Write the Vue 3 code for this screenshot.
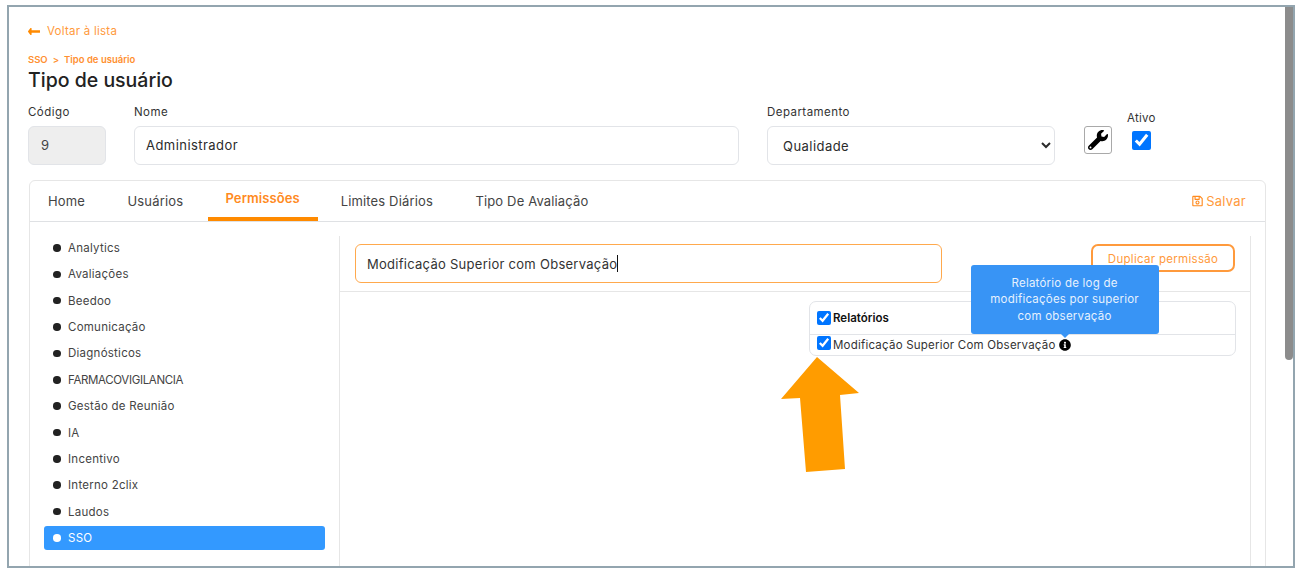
<script setup>
const modules = [
  'Analytics',
  'Avaliações',
  'Beedoo',
  'Comunicação',
  'Diagnósticos',
  'FARMACOVIGILANCIA',
  'Gestão de Reunião',
  'IA',
  'Incentivo',
  'Interno 2clix',
  'Laudos',
  'SSO'
]

const tabs = ['Home', 'Usuários', 'Permissões', 'Limites Diários', 'Tipo De Avaliação']
</script>

<template>
  <div class="frame">
    <div class="page">
      <a class="back">
        <svg class="back-icon" viewBox="0 150 448 212" preserveAspectRatio="none">
          <path d="M134.059 296H436c6.627 0 12-5.373 12-12v-56c0-6.627-5.373-12-12-12H134.059v-46.059c0-21.382-25.851-32.09-40.971-16.971L7.029 239.029c-9.373 9.373-9.373 24.569 0 33.941l86.059 86.059c15.119 15.119 40.971 4.411 40.971-16.971V296z" />
        </svg>
        Voltar à lista
      </a>

      <div class="breadcrumb">
        <span>SSO</span>
        <span class="sep">&gt;</span>
        <span>Tipo de usuário</span>
      </div>
      <h1 class="title">Tipo de usuário</h1>

      <div class="form-row">
        <div class="field code">
          <label>Código</label>
          <input value="9" disabled />
        </div>
        <div class="field name">
          <label>Nome</label>
          <input value="Administrador" />
        </div>
        <div class="field dept">
          <label>Departamento</label>
          <select>
            <option>Qualidade</option>
          </select>
        </div>
        <button class="tool-btn">
          <svg viewBox="0 0 512 512">
            <path d="M507.73 109.1c-2.24-9.03-13.54-12.09-20.12-5.51l-74.36 74.36-67.88-11.31-11.31-67.88 74.36-74.36c6.62-6.62 3.43-17.9-5.66-20.16-47.38-11.74-99.55.91-136.58 37.93-39.64 39.64-50.55 97.1-34.05 147.2L18.74 402.76c-24.99 24.99-24.99 65.51 0 90.5 24.99 24.99 65.51 24.99 90.5 0l213.21-213.21c50.12 16.71 107.47 5.68 147.37-34.22 37.07-37.07 49.7-89.32 37.91-136.73zM64 472c-13.25 0-24-10.75-24-24 0-13.26 10.75-24 24-24s24 10.74 24 24c0 13.25-10.75 24-24 24z" />
          </svg>
        </button>
        <div class="active-field">
          <label>Ativo</label>
          <input type="checkbox" checked />
        </div>
      </div>

      <div class="card">
        <div class="tabs">
          <a v-for="tab in tabs" :key="tab" class="tab" :class="{ current: tab === 'Permissões' }">{{ tab }}</a>
          <a class="save">
            <svg viewBox="0 0 448 512">
              <path d="M433.941 129.941l-83.882-83.882A48 48 0 0 0 316.118 32H48C21.49 32 0 53.49 0 80v352c0 26.51 21.49 48 48 48h352c26.51 0 48-21.49 48-48V163.882a48 48 0 0 0-14.059-33.941zM272 80v80H144V80h128zm122 352H54a6 6 0 0 1-6-6V86a6 6 0 0 1 6-6h42v104c0 13.255 10.745 24 24 24h176c13.255 0 24-10.745 24-24V83.882l78.243 78.243a6 6 0 0 1 1.757 4.243V426a6 6 0 0 1-6 6zM224 232c-48.523 0-88 39.477-88 88s39.477 88 88 88 88-39.477 88-88-39.477-88-88-88zm0 128c-22.056 0-40-17.944-40-40s17.944-40 40-40 40 17.944 40 40-17.944 40-40 40z" />
            </svg>
            Salvar
          </a>
        </div>

        <div class="panel">
          <ul class="modules">
            <li
              v-for="item in modules"
              :key="item"
              :class="{ selected: item === 'SSO', caps: item.length > 3 && item === item.toUpperCase() }"
            >
              <i class="dot"></i>{{ item }}
            </li>
          </ul>

          <div class="main">
            <div class="search-row">
              <div class="search">Modificação Superior com Observação<span class="caret"></span></div>
              <button class="duplicate">Duplicar permissão</button>
            </div>

            <div class="boxes">
              <div class="box">
                <div class="box-head">
                  <input type="checkbox" checked />
                  <span>Relatórios</span>
                </div>
                <div class="box-row">
                  <input type="checkbox" checked />
                  <span>Modificação Superior Com Observação</span>
                  <span class="info">
                    <svg viewBox="0 0 512 512">
                      <path d="M256 8C119 8 8 119 8 256s111 248 248 248 248-111 248-248S393 8 256 8zm0 110c23.196 0 42 18.804 42 42s-18.804 42-42 42-42-18.804-42-42 18.804-42 42-42zm56 254c0 6.627-5.373 12-12 12h-88c-6.627 0-12-5.373-12-12v-24c0-6.627 5.373-12 12-12h12v-64h-12c-6.627 0-12-5.373-12-12v-24c0-6.627 5.373-12 12-12h64c6.627 0 12 5.373 12 12v100h12c6.627 0 12 5.373 12 12v24z" />
                    </svg>
                    <span class="tooltip">Relatório de log de modificações por superior com observação</span>
                  </span>
                </div>
              </div>
            </div>
          </div>
        </div>
      </div>
    </div>

    <svg class="big-arrow" viewBox="0 0 81 117">
      <polygon points="37,1 79,37 60,39 65,113 26,116 20,42 1,43" />
    </svg>
    <div class="thumb"></div>
  </div>
</template>

<style>
html,
body {
  margin: 0;
  background: #fff;
  overflow: hidden;
}
</style>

<style scoped>
* {
  box-sizing: border-box;
}

.frame {
  position: relative;
  width: 1288px;
  height: 563px;
  margin: 5px 0 0 7px;
  border: 2px solid #93a5af;
  overflow: hidden;
  background: #fff;
  font-family: Inter, "Open Sans", sans-serif;
  letter-spacing: 0.25px;
  color: #2b2b2b;
}

.page {
  padding: 17px 0 0 19px;
  width: 1257px;
}

.back {
  display: flex;
  align-items: center;
  height: 14px;
  gap: 7px;
  font-size: 11.5px;
  color: #ff9a3c;
}

.back-icon {
  width: 12px;
  height: 7px;
  fill: #ff8a00;
}

.breadcrumb {
  display: flex;
  gap: 5px;
  margin-top: 16px;
  font-size: 9.5px;
  line-height: 12px;
  font-weight: 600;
  letter-spacing: 0;
  color: #ff9030;
}

.title {
  margin: 1px 0 0;
  font-size: 19.5px;
  line-height: 26px;
  font-weight: 500;
  letter-spacing: 0;
  color: #222;
}

.form-row {
  display: flex;
  align-items: flex-start;
  margin-top: 12px;
}

.field label {
  display: block;
  height: 21px;
  font-size: 11.5px;
  line-height: 15px;
  letter-spacing: 0.45px;
  color: #333;
}

.field input,
.field select {
  display: block;
  width: 100%;
  height: 39px;
  padding: 0 11px;
  border: 1px solid #e2e4e8;
  border-radius: 6px;
  background: #fff;
  font-family: inherit;
  font-size: 13px;
  letter-spacing: 0.45px;
  color: #2b2b2b;
}

.field input {
  padding-bottom: 2px;
}

.code input {
  padding-left: 12px;
}

.field input:disabled {
  background: #eee;
  color: #444;
}

.code {
  width: 78px;
  margin-right: 28px;
}

.name {
  width: 605px;
  margin-right: 28px;
}

.dept {
  width: 288px;
}

.tool-btn {
  display: flex;
  align-items: center;
  justify-content: center;
  width: 28px;
  height: 28px;
  margin: 21px 0 0 29px;
  padding: 0;
  border: 1px solid #a9a9a9;
  border-radius: 3px;
  background: #fff;
}

.tool-btn svg {
  width: 20px;
  height: 20px;
  fill: #000;
}

.active-field {
  display: flex;
  flex-direction: column;
  margin: 6px 0 0 15px;
}

.active-field label {
  height: 15px;
  font-size: 11.5px;
  line-height: 15px;
  color: #333;
}

.active-field input {
  width: 19px;
  height: 19px;
  margin: 5px 0 0 5px;
}

.card {
  width: 1237px;
  height: 420px;
  margin: 15px 0 0 1px;
  border: 1px solid #e6e6e6;
  border-radius: 6px;
}

.tabs {
  display: flex;
  align-items: stretch;
  height: 41px;
  border-bottom: 1px solid #dfe1e4;
}

.tab {
  display: flex;
  align-items: center;
  padding: 0 18px;
  margin-right: 6.5px;
  font-size: 13px;
  letter-spacing: 0.15px;
  color: #444;
}

.tab.current {
  flex: none;
  width: 110px;
  justify-content: center;
  margin-right: 5px;
  padding: 0 0 2px;
  border-bottom: 4px solid #ff8a00;
  font-weight: 600;
  letter-spacing: 0.1px;
  color: #ff8a1e;
}

.save {
  display: flex;
  align-items: center;
  gap: 3px;
  margin-left: auto;
  margin-right: 19px;
  font-size: 13px;
  color: #ff9a3c;
}

.save svg {
  width: 11px;
  height: 12px;
  fill: #ff8a1e;
}

.panel {
  display: flex;
  height: 378px;
  padding-top: 14px;
}

.modules {
  width: 310px;
  margin: 0;
  padding: 0 14px;
  list-style: none;
  border-right: 1px solid #e6e6e6;
}

.modules li {
  display: flex;
  align-items: center;
  gap: 7.5px;
  height: 24px;
  margin-bottom: 2.36px;
  padding-left: 9px;
  border-radius: 3px;
  font-size: 11.5px;
  color: #444;
}

.modules li.caps {
  letter-spacing: -0.35px;
}

.modules li.selected {
  background: #3399ff;
  color: #fff;
}

.dot {
  flex: none;
  width: 7.5px;
  height: 7.5px;
  border-radius: 50%;
  background: #222;
}

.selected .dot {
  background: #fff;
}

.main {
  width: 911px;
  border-right: 1px solid #e6e6e6;
}

.search-row {
  display: flex;
  align-items: flex-start;
  justify-content: space-between;
  height: 56px;
  padding: 8px 15px 0;
  border-bottom: 1px solid #e6e6e6;
}

.search {
  display: flex;
  align-items: center;
  width: 587px;
  height: 39px;
  padding: 0 11px;
  border: 1px solid #ffa94d;
  border-radius: 6px;
  font-size: 13px;
  letter-spacing: 0.27px;
  color: #333;
}

.caret {
  width: 1px;
  height: 17px;
  background: #111;
}

.duplicate {
  width: 144px;
  height: 28px;
  padding: 1px 0 0;
  border: 2px solid #ff9a3c;
  border-radius: 7px;
  background: #fff;
  font-family: inherit;
  font-size: 11.5px;
  letter-spacing: 0.3px;
  color: #ff9a3c;
}

.boxes {
  display: flex;
  justify-content: flex-end;
  padding: 9px 14px 0 0;
}

.box {
  width: 427px;
  border: 1px solid #e2e4e8;
  border-radius: 7px;
}

.box-head {
  display: flex;
  align-items: center;
  gap: 2px;
  height: 33px;
  padding-left: 7px;
  border-bottom: 1px solid #e2e4e8;
  font-size: 11.5px;
  font-weight: 600;
  letter-spacing: 0;
  color: #111;
}

.box-row {
  display: flex;
  align-items: center;
  gap: 2px;
  height: 20px;
  padding-left: 7px;
  font-size: 11.5px;
  letter-spacing: 0.22px;
  color: #333;
}

.box input {
  width: 14px;
  height: 14px;
  margin: 0;
}

.box-row input {
  margin-top: -4px;
}

.info {
  position: relative;
  display: flex;
  width: 12px;
  height: 12px;
  margin-left: 1px;
}

.info svg {
  width: 12px;
  height: 12px;
  fill: #000;
}

.tooltip {
  position: absolute;
  left: 50%;
  bottom: calc(100% + 5px);
  width: 188px;
  padding: 10px 16px;
  transform: translateX(-50%);
  border-radius: 3px;
  background: #3894f5;
  font-size: 11.5px;
  line-height: 16.5px;
  text-align: center;
  color: #e6f1fe;
}

.tooltip::after {
  content: "";
  position: absolute;
  left: 50%;
  top: 100%;
  margin-left: -4px;
  border: 4px solid transparent;
  border-bottom: 0;
  border-top-color: #3894f5;
}

.big-arrow {
  position: absolute;
  left: 771px;
  top: 349px;
  width: 81px;
  height: 117px;
  fill: #ff9c00;
}

.thumb {
  position: absolute;
  left: 1276px;
  top: 0;
  width: 8px;
  height: 353px;
  border-radius: 0 0 4px 4px;
  background: #8c8c8c;
}
</style>
